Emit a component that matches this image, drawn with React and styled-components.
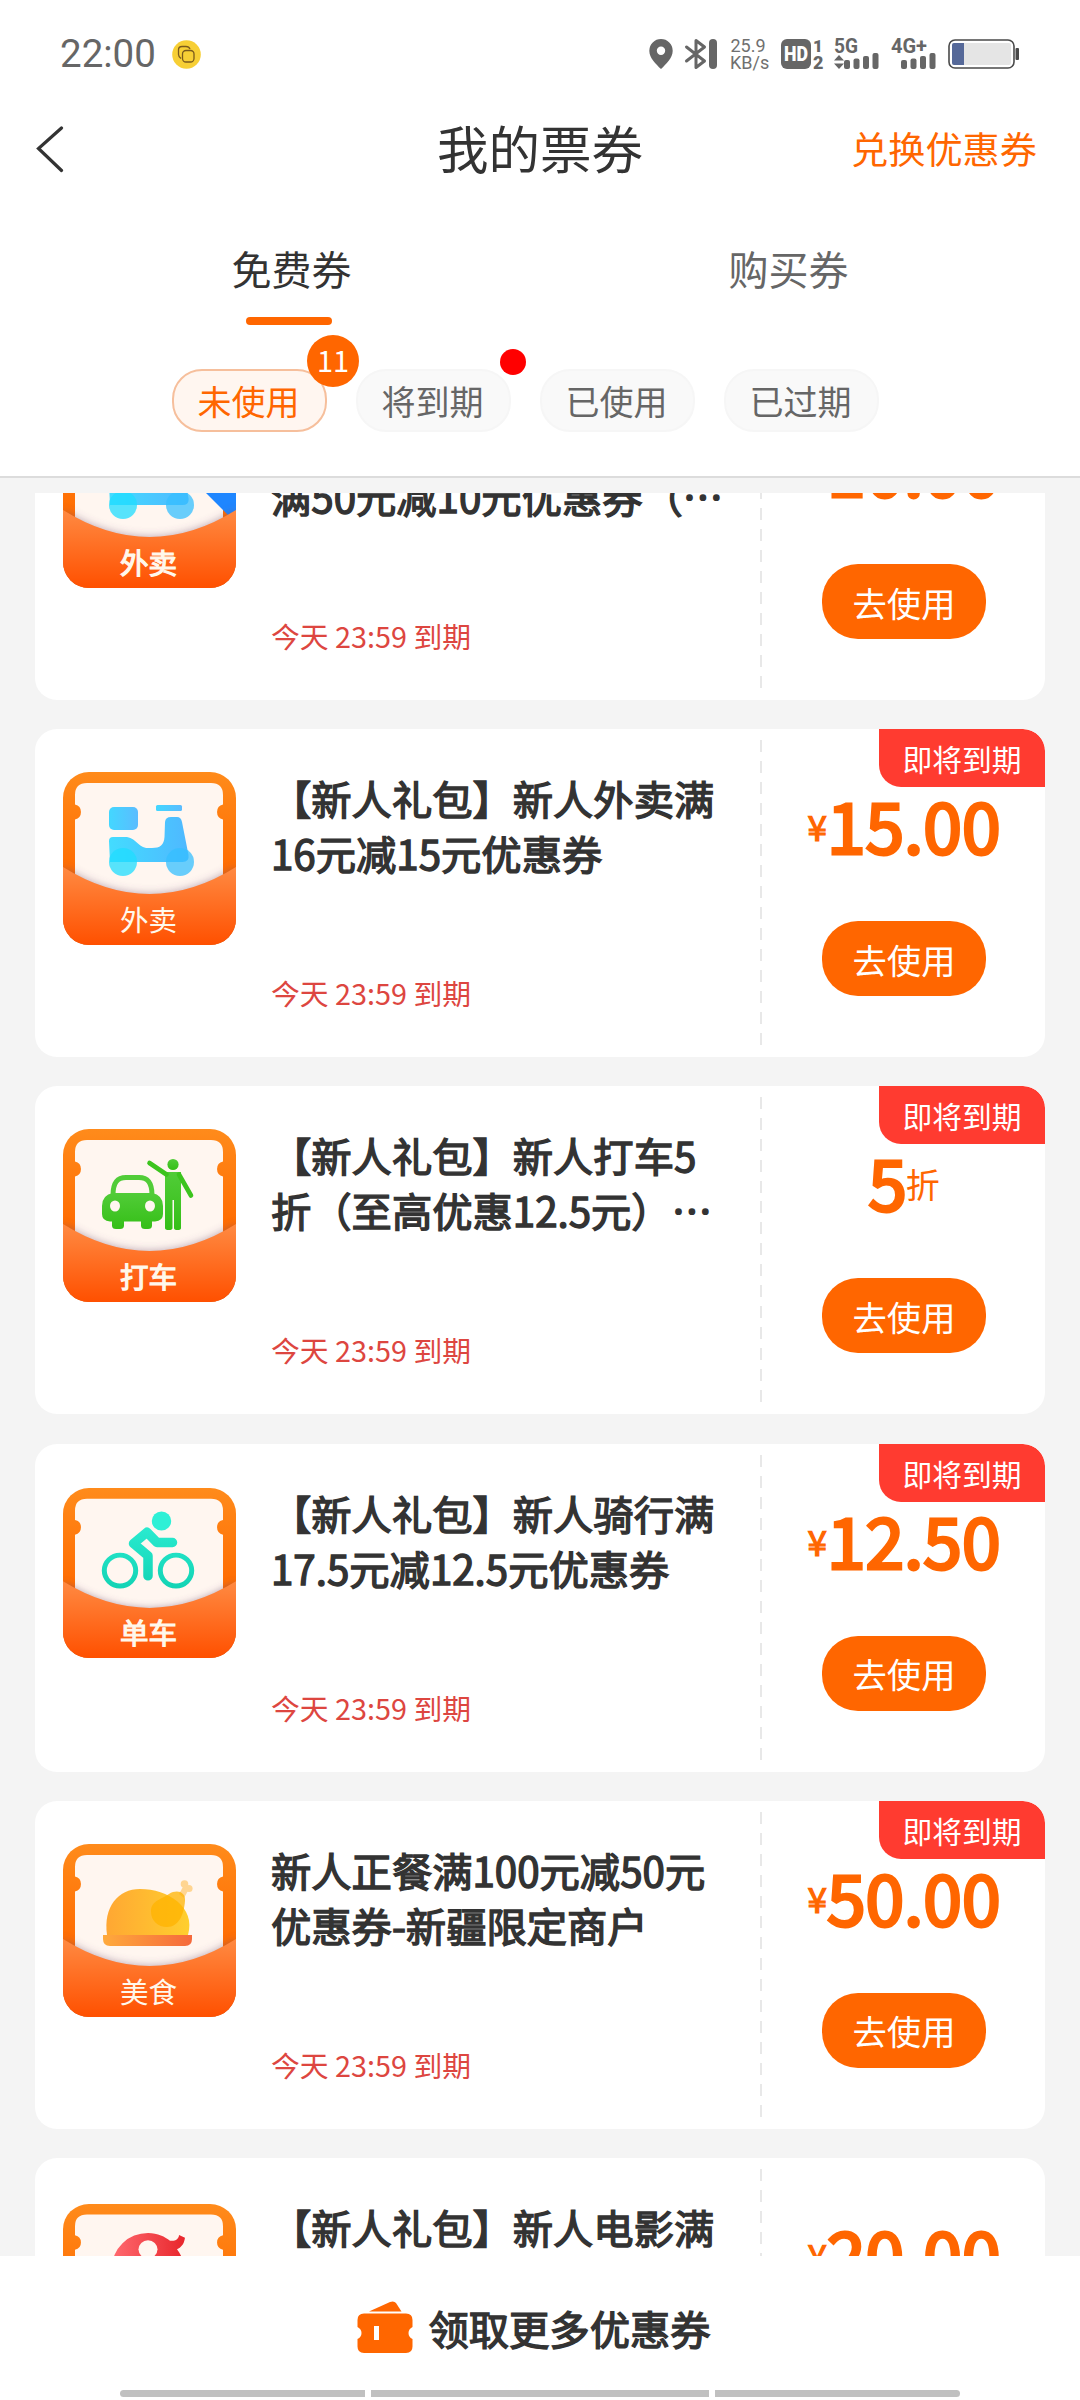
import React from "react";
import styled, { createGlobalStyle } from "styled-components";

const GlobalStyle = createGlobalStyle`
  * {
    box-sizing: border-box;
  }
  body {
    margin: 0;
    background: #fff;
    font-family: "Noto Sans CJK SC", "Noto Sans", sans-serif;
    color: #333;
  }
`;

const Page = styled.div`
  width: 1080px;
  height: 2400px;
  display: flex;
  flex-direction: column;
  overflow: hidden;
  background: #fff;
`;

const StatusBar = styled.div`
  height: 108px;
  flex-shrink: 0;
  padding: 0 61px 0 60px;
  display: flex;
  align-items: center;
`;

const Time = styled.div`
  width: 112px;
  font-family: Roboto, sans-serif;
  font-size: 38.5px;
  line-height: 40px;
  color: #666;
`;

const StatusIcons = styled.div`
  margin-left: auto;
  display: flex;
  align-items: center;

  svg {
    display: block;
    overflow: visible;
  }
`;

const StatusItem = styled.div`
  margin-left: ${(props) => props.$gap}px;
`;

const Speed = styled.div`
  width: 36px;
  margin-left: 13px;
  margin-right: 1px;
  font-family: Roboto, sans-serif;
  font-size: 18px;
  line-height: 17px;
  color: #707070;
  text-align: center;
  white-space: nowrap;
`;

const Header = styled.div`
  height: 84px;
  flex-shrink: 0;
  padding: 0 43px 0 36px;
  display: grid;
  grid-template-columns: 1fr auto 1fr;
  align-items: center;
`;

const PageTitle = styled.h1`
  margin: -6px -7px 0 0;
  font-size: 51.5px;
  font-weight: 400;
  line-height: 74px;
`;

const ExchangeLink = styled.div`
  justify-self: end;
  margin-top: -5px;
  font-size: 37.2px;
  line-height: 54px;
  color: #ff6600;
`;

const Tabs = styled.div`
  height: 133px;
  flex-shrink: 0;
  padding: 47px 43px 0;
  display: flex;
`;

const Tab = styled.div`
  flex: 1;
  display: flex;
  flex-direction: column;
  align-items: center;
  font-size: 40px;
  line-height: 58px;
  color: ${(props) => (props.$active ? "#333" : "#666")};
`;

const TabLine = styled.div`
  width: 86px;
  height: 8px;
  margin: 20px 6px 0 0;
  border-radius: 4px;
  background: #ff6600;
`;

const Filters = styled.div`
  height: 153px;
  flex-shrink: 0;
  padding: 44px 0 0 172px;
  display: flex;
  gap: 29px;
  border-bottom: 2px solid #dcdcdc;
`;

const Pill = styled.div`
  position: relative;
  width: 155px;
  height: 63px;
  padding-right: 2px;
  border-radius: 30px;
  border: 2px solid ${(props) => (props.$active ? "#f6bf9c" : "#f6f6f6")};
  background: ${(props) => (props.$active ? "#fff6f0" : "#f9f9f9")};
  color: ${(props) => (props.$active ? "#ff6600" : "#666")};
  font-size: 34px;
  line-height: 60px;
  text-align: center;
`;

const CountBadge = styled.span`
  position: absolute;
  top: -36px;
  right: -34px;
  width: 52px;
  height: 52px;
  border-radius: 50%;
  background: #ff6600;
  color: #fff;
  font-size: 29px;
  line-height: 49px;
`;

const RedDot = styled.span`
  position: absolute;
  top: -22px;
  right: -17px;
  width: 26px;
  height: 26px;
  border-radius: 50%;
  background: #ff0000;
`;

const ListWrapper = styled.div`
  height: 1778px;
  flex-shrink: 0;
  padding: 15px 35px 0;
  background: #f4f4f4;
`;

const List = styled.div`
  height: 1763px;
  overflow: hidden;
`;

// the list is scrolled a bit, so the first card is cut by the header
const Scrolled = styled.div`
  margin-top: -121px;
  display: flex;
  flex-direction: column;
  gap: 29.2px;
`;

const Card = styled.div`
  position: relative;
  height: 328px;
  flex-shrink: 0;
  display: flex;
  border-radius: 22px;
  background: #fff;
  overflow: hidden;
`;

const IconBox = styled.div`
  width: 173px;
  height: 173px;
  margin: 43px 35px 0 28px;
  display: flex;
  align-items: center;

  svg {
    display: block;
  }
`;

const Info = styled.div`
  width: 489px;
  padding: 41px 0 43px;
  display: flex;
  flex-direction: column;
  justify-content: space-between;
`;

const CardTitle = styled.div`
  font-size: 40.3px;
  line-height: 55px;
  white-space: pre;
  text-spacing-trim: space-all;
  -webkit-text-stroke: 1.4px #333;
`;

const Expire = styled.div`
  font-size: 28.8px;
  line-height: 42px;
  color: #dd4640;
`;

const Separator = styled.div`
  width: 2px;
  margin: 11px 0;
  background: repeating-linear-gradient(#e8e8e8 0 12px, #fff 12px 20.9px);
`;

const Action = styled.div`
  flex: 1;
  padding: 55px 0 0 1px;
  display: flex;
  flex-direction: column;
  align-items: center;
`;

const Price = styled.div`
  height: 80px;
  margin-bottom: 57px;
  display: flex;
  align-items: center;
  color: #ff6600;
`;

const Yen = styled.span`
  margin-top: 4px;
  font-size: 35px;
  line-height: 50px;
  -webkit-text-stroke: 1.2px #ff6600;
`;

const Amount = styled.span`
  font-size: 69.5px;
  line-height: 80px;
  -webkit-text-stroke: 3.2px #ff6600;
`;

const Unit = styled.span`
  margin: 5px 0 0 -1px;
  font-size: 34px;
  line-height: 50px;
`;

const UseButton = styled.button`
  width: 164px;
  height: 75px;
  padding: 0;
  border: none;
  border-radius: 36px;
  background: #ff6600;
  color: #fff;
  font-family: inherit;
  font-size: 34.3px;
  line-height: 50px;
`;

const ExpireTag = styled.div`
  position: absolute;
  top: 0;
  right: 0;
  width: 166px;
  height: 58px;
  border-radius: 0 22px 0 22px;
  background: #ff3b30;
  color: #fff;
  font-size: 29.8px;
  line-height: 58px;
  text-align: center;
`;

const BottomBar = styled.div`
  height: 134px;
  flex-shrink: 0;
  padding: 9px 12px 0 0;
  display: flex;
  align-items: center;
  justify-content: center;
  gap: 15px;
  font-size: 40.3px;
  line-height: 58px;
  -webkit-text-stroke: 1.4px #333;
`;

const NavBars = styled.div`
  height: 7px;
  padding: 0 120px;
  display: flex;
  gap: 6px;
`;

const NavBar = styled.div`
  flex: ${(props) => props.$size} 0 0;
  border-radius: ${(props) => props.$radius || "0"};
  background: #c0c0c0;
`;

const Scooter = () => (
  <g>
    <rect x="46" y="35" width="29" height="23" rx="5" fill="url(#cyan)" />
    <rect x="93" y="33" width="26" height="6" rx="1.5" fill="url(#cyan)" />
    <path
      d="M46 69q0-4 4-4h12c11 0 13 11 23 11h4c8 0 12-3 12.500-11L102 50q.5-5 6-5h6q4 0 5 5l6.500 33q1 7-6 7H47Z"
      fill="url(#cyan2)"
    />
    <circle cx="60" cy="90" r="14" fill="#1fdcff" fillOpacity=".75" />
    <circle cx="117" cy="90" r="14" fill="#35bfff" fillOpacity=".75" />
  </g>
);

const Taxi = () => (
  <g fill="url(#green)" stroke="none">
    <path
      d="M50 66c0-12 4-17.500 13-17.500h13c9 0 13 5.500 13 17.500"
      fill="none"
      stroke="#51cc38"
      strokeWidth="5"
    />
    <path d="M50 64h39q11 2 11 13v8q0 7-8 7.500H89v4q0 3.500-4 3.500h-3q-4 0-4-3.500v-4H61v4q0 3.500-4 3.500h-4q-4 0-4-3.500v-4h-2q-8-.5-8-7.500v-8q0-11 11-13Z" />
    <ellipse cx="52" cy="77" rx="5" ry="5.500" fill="#fff6f0" />
    <ellipse cx="87" cy="77" rx="5" ry="5.500" fill="#fff6f0" />
    <circle cx="110" cy="35.500" r="5.600" />
    <path d="M102 43h16v56q0 2-3.500 2t-3.500-2V71h-1.500v28q0 2-3.750 2t-3.750-2Z" />
    <path
      d="M86.500 34l17 11.500M116 45.500l12 21"
      fill="none"
      stroke="#3cc41e"
      strokeWidth="4.600"
      strokeLinecap="round"
    />
  </g>
);

const Cyclist = () => (
  <g fill="none" stroke="url(#teal)">
    <circle cx="98.500" cy="33.500" r="9.700" fill="#2ff0d6" stroke="none" />
    <circle cx="57" cy="84" r="15.700" strokeWidth="5" />
    <circle cx="113" cy="84" r="15.700" strokeWidth="5" />
    <path
      d="M109.500 55.500H94L84 45 70.500 56.500 85 69v20.500"
      strokeWidth="9.500"
      strokeLinecap="round"
      strokeLinejoin="round"
    />
  </g>
);

const Chicken = () => (
  <g>
    <path
      d="M44 91C40 63 55 45 77 45c28 0 56 18 48 46Z"
      fill="url(#roast)"
    />
    <g fill="#ffd592">
      <circle cx="121.500" cy="40" r="3.800" />
      <circle cx="126" cy="44.500" r="3.600" />
      <path d="M116 50l5-9 5 4-5 9Z" />
    </g>
    <path
      d="M104 83c-9 0-16-6-16-15.500C88 57 97 56 106 50c8-5 17-2 16 7-1 13-6 26-18 26Z"
      fill="#ffb300"
      fillOpacity=".75"
    />
    <path d="M40 91h89v4q0 7-7 7H47q-7 0-7-7Z" fill="url(#plate)" />
  </g>
);

const Film = () => (
  <g>
    <path
      d="M85 30c10 0 17 4 22 8 5 1 9-2 9-6l6 3c-1 7-4 10-8 12 4 6 7 11 7 19a36 36 0 1 1-36-36Z"
      fill="url(#red)"
    />
    <circle cx="85" cy="47" r="9.500" fill="#fff6f0" />
  </g>
);

const pictures = {
  scooter: Scooter,
  taxi: Taxi,
  cyclist: Cyclist,
  chicken: Chicken,
  film: Film,
};

const CouponIcon = ({ picture, label, bold, ribbon, height = 173 }) => {
  const Picture = pictures[picture];
  return (
    <svg
      width="173"
      height={height}
      viewBox="0 0 173 173"
      preserveAspectRatio="none"
    >
      <g clipPath="url(#iconClip)">
        <rect width="173" height="173" fill="url(#frame)" />
        <path
          d="M12 130V47.500a7.700 7.700 0 0 0 0-15V23q0-12 12-12H148q12 0 12 12v9.500a7.700 7.700 0 0 0 0 15V130Z"
          fill="#fff6f0"
        />
        <Picture />
        {ribbon && <path d="M65 0L173 108V0Z" fill="#1e86ff" />}
        <path
          d="M0 95Q86.500 149 173 95V173H0Z"
          fill="#705070"
          fillOpacity=".5"
          filter="url(#soft)"
        />
        <path d="M0 95Q86.500 149 173 95V173H0Z" fill="url(#pocket)" />
        <text
          x="85.5"
          y="159"
          textAnchor="middle"
          fontSize="28.500"
          fill="#fff8ec"
          stroke="#fff8ec"
          strokeWidth={bold ? 1.2 : 0}
        >
          {label}
        </text>
      </g>
    </svg>
  );
};

const Gradient = ({ id, from, to, across }) => (
  <linearGradient id={id} x1="0" y1="0" x2={across ? 1 : 0} y2={across ? 0 : 1}>
    <stop offset="0" stopColor={from} />
    <stop offset="1" stopColor={to} />
  </linearGradient>
);

const Defs = styled.svg`
  position: absolute;
`;

const IconDefs = () => (
  <Defs width="0" height="0">
    <defs>
      <clipPath id="iconClip">
        <rect width="173" height="173" rx="26" />
      </clipPath>
      <filter id="soft" x="-10%" y="-30%" width="120%" height="160%">
        <feGaussianBlur stdDeviation="4" />
      </filter>
      <linearGradient id="frame" x1="0" y1="0" x2="0" y2="1">
        <stop offset="0" stopColor="#ff8b1b" />
        <stop offset=".6" stopColor="#ff6a00" />
      </linearGradient>
      <linearGradient id="pocket" x1="0" y1="0" x2="0" y2="1">
        <stop offset="0" stopColor="#ff8a42" />
        <stop offset="1" stopColor="#ff5000" />
      </linearGradient>
      <Gradient id="cyan" from="#43d7ff" to="#5bbcff" across />
      <Gradient id="cyan2" from="#43dcff" to="#4fb8ff" across />
      <Gradient id="green" from="#51cc38" to="#35bf17" />
      <linearGradient
        id="teal"
        gradientUnits="userSpaceOnUse"
        x1="0"
        y1="25"
        x2="0"
        y2="103"
      >
        <stop offset="0" stopColor="#2ff0d6" />
        <stop offset="1" stopColor="#12d3b4" />
      </linearGradient>
      <Gradient id="roast" from="#ffa733" to="#ffcf2e" across />
      <Gradient id="plate" from="#ffaa3c" to="#f5693c" across />
      <Gradient id="red" from="#ff6a70" to="#e8262c" across />
    </defs>
  </Defs>
);

const Signal = ({ label, data, width }) => (
  <svg width="45" height="30" fill="#666">
    <text
      x="0"
      y="14"
      fontSize="19.5"
      fontWeight="700"
      fontFamily="Roboto, sans-serif"
      textLength={width}
      lengthAdjust="spacingAndGlyphs"
    >
      {label}
    </text>
    {data && <path d="M5 16l5 5.500H0ZM5 30l5-5.500H0Z" />}
    <rect x="10" y="21" width="6" height="9" rx="2" />
    <rect x="19.5" y="19.500" width="6" height="10.500" rx="2" />
    <rect x="29" y="17" width="6" height="13" rx="2" />
    <rect x="38.5" y="14" width="6" height="16" rx="2" />
  </svg>
);

const coupons = [
  {
    picture: "scooter",
    label: "外卖",
    bold: true,
    ribbon: true,
    title: "【新人礼包】新人外卖\n满50元减10元优惠券（…",
    amount: "10.00",
  },
  {
    picture: "scooter",
    label: "外卖",
    title: "【新人礼包】新人外卖满\n16元减15元优惠券",
    amount: "15.00",
    soon: true,
  },
  {
    picture: "taxi",
    label: "打车",
    bold: true,
    title: "【新人礼包】新人打车5\n折（至高优惠12.5元）…",
    amount: "5",
    unit: "折",
    soon: true,
  },
  {
    picture: "cyclist",
    label: "单车",
    bold: true,
    height: 170,
    title: "【新人礼包】新人骑行满\n17.5元减12.5元优惠券",
    amount: "12.50",
    soon: true,
  },
  {
    picture: "chicken",
    label: "美食",
    title: "新人正餐满100元减50元\n优惠券-新疆限定商户",
    amount: "50.00",
    soon: true,
  },
  {
    picture: "film",
    label: "电影",
    height: 167,
    title: "【新人礼包】新人电影满\n30元减20元优惠券",
    amount: "20.00",
  },
];

const Coupon = ({ coupon }) => (
  <Card>
    <IconBox>
      <CouponIcon
        picture={coupon.picture}
        label={coupon.label}
        bold={coupon.bold}
        ribbon={coupon.ribbon}
        height={coupon.height}
      />
    </IconBox>
    <Info>
      <CardTitle>{coupon.title}</CardTitle>
      <Expire>今天 23:59 到期</Expire>
    </Info>
    <Separator />
    <Action>
      <Price>
        {!coupon.unit && <Yen>¥</Yen>}
        <Amount>{coupon.amount}</Amount>
        {coupon.unit && <Unit>{coupon.unit}</Unit>}
      </Price>
      <UseButton>去使用</UseButton>
    </Action>
    {coupon.soon && <ExpireTag>即将到期</ExpireTag>}
  </Card>
);

const App = () => {
  return (
    <Page>
      <GlobalStyle />
      <IconDefs />
      <StatusBar>
        <Time>22:00</Time>
        <svg width="29" height="29" viewBox="0 0 29 29">
          <circle cx="14.5" cy="14.5" r="14.300" fill="#f7cf35" />
          <g fill="none" stroke="#7a5a1c" strokeWidth="1.300">
            <path d="M9 18.500q-2.500-2-2.500-4V10q0-3.500 3.500-3.500h4q3 0 4 2.500" />
            <rect x="10.5" y="10.500" width="11.500" height="11.500" rx="3.500" />
          </g>
        </svg>
        <StatusIcons>
          <svg width="24" height="30" fill="#666">
            <path
              fillRule="evenodd"
              d="M12 0a11.700 11.700 0 0 1 11.700 11.700C23.700 19 17 25 12 30 7 25 .3 19 .3 11.700A11.700 11.700 0 0 1 12 0Zm0 7.500a4.200 4.200 0 1 0 0 8.400 4.200 4.200 0 0 0 0-8.400Z"
            />
          </svg>
          <StatusItem $gap={12}>
            <svg width="32" height="30">
              <path
                d="M1.500 8L19.500 22 11 28.500V1.500L19.500 8 1.500 22"
                fill="none"
                stroke="#666"
                strokeWidth="3"
                strokeLinejoin="round"
                strokeLinecap="round"
              />
              <rect x="24" width="8" height="30" rx="4" fill="#666" />
            </svg>
          </StatusItem>
          <Speed>
            <div>25.9</div>
            <div>KB/s</div>
          </Speed>
          <StatusItem $gap={14}>
            <svg width="43" height="30" fontFamily="Roboto, sans-serif">
              <rect width="30" height="30" rx="6" fill="#666" />
              <text
                x="3"
                y="22"
                fontSize="20"
                fontWeight="900"
                fill="#fff"
                textLength="24"
                lengthAdjust="spacingAndGlyphs"
              >
                HD
              </text>
              <text x="32" y="12.500" fontSize="17" fontWeight="900" fill="#666">
                1
              </text>
              <text x="32" y="29.500" fontSize="18" fontWeight="900" fill="#666">
                2
              </text>
            </svg>
          </StatusItem>
          <StatusItem $gap={10}>
            <Signal label="5G" width="24" data />
          </StatusItem>
          <StatusItem $gap={12}>
            <Signal label="4G+" width="36" />
          </StatusItem>
          <StatusItem $gap={12}>
            <svg width="71" height="30">
              <rect
                x="1"
                y="1"
                width="65"
                height="28"
                rx="6"
                fill="#fff"
                stroke="#4a4a4a"
                strokeWidth="1.600"
              />
              <rect x="4" y="4" width="59" height="22" rx="2" fill="#e5e5e5" />
              <path d="M6 4H16V26H6q-2 0-2-2V6q0-2 2-2Z" fill="#566999" />
              <rect x="67.500" y="9" width="3.500" height="12" rx="1" fill="#4a4a4a" />
            </svg>
          </StatusItem>
        </StatusIcons>
      </StatusBar>
      <Header>
        <svg width="28" height="48">
          <path
            d="M25.500 2L2.500 22.500l23 22"
            fill="none"
            stroke="#333"
            strokeWidth="3.200"
            strokeLinecap="round"
          />
        </svg>
        <PageTitle>我的票券</PageTitle>
        <ExchangeLink>兑换优惠券</ExchangeLink>
      </Header>
      <Tabs>
        <Tab $active>
          免费券
          <TabLine />
        </Tab>
        <Tab>购买券</Tab>
      </Tabs>
      <Filters>
        <Pill $active>
          未使用
          <CountBadge>11</CountBadge>
        </Pill>
        <Pill>
          将到期
          <RedDot />
        </Pill>
        <Pill>已使用</Pill>
        <Pill>已过期</Pill>
      </Filters>
      <ListWrapper>
        <List>
          <Scrolled>
            {coupons.map((coupon) => (
              <Coupon key={coupon.amount} coupon={coupon} />
            ))}
          </Scrolled>
        </List>
      </ListWrapper>
      <BottomBar>
        <svg width="56" height="53" fill="#ff6600">
          <path d="M12 10.500L33 1q4-1.500 6 1l5.500 8.500Z" />
          <path
            fillRule="evenodd"
            d="M7 12.500H49q6.500 0 6.500 6.500v7q-4 2-4 6t4 6v7.500q0 6.500-6.500 6.500H7q-6.500 0-6.500-6.500V38q4-2 4-6t-4-6v-7q0-6.500 6.500-6.500ZM17 25v14h5V25Z"
          />
        </svg>
        领取更多优惠券
      </BottomBar>
      <NavBars>
        <NavBar $size={245} $radius="4px 0 0 4px" />
        <NavBar $size={338} />
        <NavBar $size={245} $radius="0 4px 4px 0" />
      </NavBars>
    </Page>
  );
};

export default App;
